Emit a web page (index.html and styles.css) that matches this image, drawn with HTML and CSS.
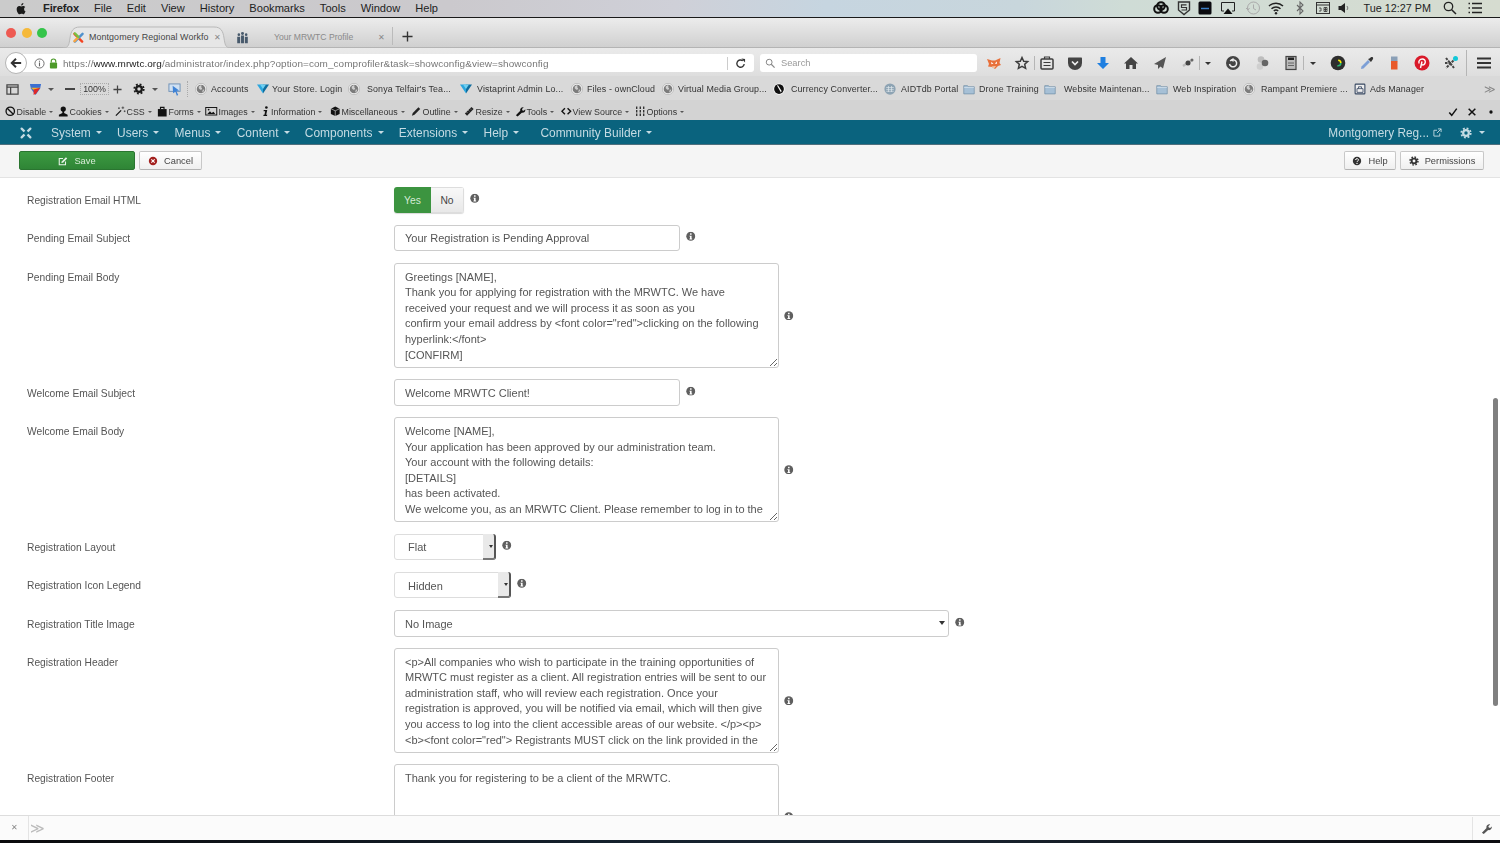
FILE: index.html
```
<!DOCTYPE html>
<html lang="en">
<head>
<meta charset="utf-8">
<title>Montgomery Regional Workforce</title>
<link rel="stylesheet" href="styles.css">
</head>
<body>
<svg class="defs" aria-hidden="true">
  <symbol id="globe" viewBox="0 0 16 16"><circle cx="8" cy="8" r="7.500" fill="#f4f4f4" stroke="#a8a8a8" stroke-width=".8"/><circle cx="8" cy="8" r="5.800" fill="#7c7c7c"/><path d="M5 4.500l2.500-1.500 1.500.8-1 1.700 1.500 1-.5 2-2 .5-2-2zM10.500 8.500l2 .5-1.500 3-1.500.5z" fill="#cfcfcf"/></symbol>
  <symbol id="folder" viewBox="0 0 16 16"><path d="M1 3.500h5l1 1.500h8v9.500H1z" fill="#a6c0d6" stroke="#6d8aa3" stroke-width=".9"/><path d="M1.500 6h13" stroke="#d5e3ee"/></symbol>
  <symbol id="vista" viewBox="0 0 16 16"><path d="M0 2h8L8 14z" fill="#2ba6de"/><path d="M8 2h8l-8 12z" fill="#0f6d9e"/><path d="M4 2h8l-4 6z" fill="#6fd0f2"/></symbol>
  <symbol id="info" viewBox="0 0 16 16"><circle cx="8" cy="8" r="7.500" fill="#5f5f5f"/><rect x="6.800" y="3" width="2.600" height="2.500" fill="#fff"/><path d="M5.800 7h3.600v4.800h1v1.500H5.800v-1.500h1V8.400h-1z" fill="#fff"/></symbol>
  <symbol id="gear" viewBox="0 0 16 16"><circle cx="8" cy="8" r="3.800" fill="none" stroke="currentColor" stroke-width="3"/><circle cx="8" cy="8" r="6.300" fill="none" stroke="currentColor" stroke-width="2.400" stroke-dasharray="2.500 2.450"/></symbol>
  <symbol id="joomla" viewBox="0 0 16 16"><g fill="none" stroke-width="3" stroke-linecap="round"><path d="M3 3.500l9.500 9.500" stroke="#f44321"/><path d="M13 3.500L3.500 13" stroke="#5091cd"/><path d="M3 12.500L12.500 3" stroke="#f9a541" stroke-dasharray="6 8"/><path d="M3.500 3l9.500 9.500" stroke="#7ac143" stroke-dasharray="6 8"/></g></symbol>
</svg>

<div class="page">
  <header class="osbar">
    <svg class="os-apple" viewBox="0 0 16 16"><path d="M11.200 8.500c0-1.600 1.300-2.300 1.400-2.400-.8-1.100-2-1.300-2.400-1.300-1-.1-2 .6-2.500.6-.5 0-1.300-.6-2.200-.6C4.300 4.800 3.200 5.500 2.600 6.500c-1.200 2.100-.3 5.200.9 6.900.6.800 1.200 1.700 2.100 1.700.8 0 1.200-.5 2.200-.5s1.300.5 2.200.5c.9 0 1.500-.8 2-1.700.7-1 .9-1.900 1-1.900-.1 0-1.800-.7-1.800-3zM9.600 3.500c.5-.6.8-1.400.7-2.200-.7 0-1.500.5-2 1-.4.5-.8 1.300-.7 2.100.8.100 1.500-.4 2-.9z"/></svg>
    <nav class="os-menu"><b>Firefox</b><span>File</span><span>Edit</span><span>View</span><span>History</span><span>Bookmarks</span><span>Tools</span><span>Window</span><span>Help</span></nav>
    <div class="os-status">
      <svg class="ic" viewBox="0 0 16 16"><circle cx="5" cy="9" r="3.800" fill="none" stroke="#111" stroke-width="2"/><circle cx="11" cy="9" r="3.800" fill="none" stroke="#111" stroke-width="2"/><circle cx="8" cy="6" r="3.800" fill="none" stroke="#111" stroke-width="2"/></svg>
      <svg class="ic g7" viewBox="0 0 16 16"><path d="M2.500 2h11v8l-5.500 4.500L2.500 10z" fill="none" stroke="#333" stroke-width="1.400"/><path d="M10.500 4.800h-5v2.700h5v2.500h-5" fill="none" stroke="#333" stroke-width="1.200"/></svg>
      <svg class="ic g5" viewBox="0 0 16 16"><rect x="1.500" y="1.500" width="13" height="13" rx="1.500" fill="#0b0b0f"/><path d="M4 8.500h8" stroke="#3d7fc4" stroke-width="1.500"/></svg>
      <svg class="ic g7" viewBox="0 0 16 16"><path d="M4 11H1.500V2.500h13V11H12" fill="none" stroke="#222"/><path d="M3.500 14L8 8.500l4.500 5.500z" fill="#111"/></svg>
      <svg class="ic g9" viewBox="0 0 16 16"><circle cx="8.500" cy="8" r="6" fill="none" stroke="#aaa"/><path d="M8.500 4.500V8.500l2.500 1.500M1 8l2 2 1.500-2" fill="none" stroke="#aaa"/></svg>
      <svg class="ic g7" viewBox="0 0 16 16"><g fill="none" stroke="#222" stroke-width="1.500"><path d="M1 6a10 10 0 0 1 14 0"/><path d="M3.500 8.700a6.500 6.500 0 0 1 9 0"/><path d="M5.800 11a3.300 3.300 0 0 1 4.400 0"/></g><circle cx="8" cy="13.200" r="1.200" fill="#222"/></svg>
      <svg class="ic g8" viewBox="0 0 16 16"><path d="M5 5l6 6-3 3V2l3 3-6 6" fill="none" stroke="#666" stroke-width="1.100"/></svg>
      <svg class="ic g7" viewBox="0 0 16 16"><rect x="1.500" y="2.500" width="13" height="11" fill="none" stroke="#333"/><path d="M1.500 5h13" stroke="#333"/><path d="M4 8h2v3H4M9 7.500h3v4H9zM10.500 7.500v4M9 9.500h3" fill="none" stroke="#333" stroke-width=".8"/></svg>
      <svg class="ic g5" viewBox="0 0 16 16"><path d="M2.500 6H5l4-3v10L5 10H2.500z" fill="#222"/><path d="M11 6a3 3 0 0 1 0 4" fill="none" stroke="#777"/></svg>
      <span class="os-time">Tue 12:27 PM</span>
      <svg class="ic g11" viewBox="0 0 16 16"><circle cx="6.500" cy="6.500" r="4.200" fill="none" stroke="#222" stroke-width="1.300"/><path d="M9.700 9.700L14 14" stroke="#222" stroke-width="1.500"/></svg>
      <svg class="ic g9" viewBox="0 0 16 16"><path d="M5 3.500h10M5 8h10M5 12.500h10M1.500 3.500h1.500M1.500 8h1.500M1.500 12.500h1.500" stroke="#222" stroke-width="1.300"/></svg>
    </div>
  </header>

  <div class="tabs">
    <div class="lights"><i class="lt red"></i><i class="lt yel"></i><i class="lt grn"></i></div>
    <div class="tab active">
      <svg class="tab-shape" viewBox="0 0 168 22" preserveAspectRatio="none"><path d="M0 22c6 0 6-4 7-10 1-7 3-11 10-11h134c7 0 9 4 10 11 1 6 1 10 7 10z" fill="#e6e6e6" stroke="#b9b9b9"/></svg>
      <svg class="fav" viewBox="0 0 16 16"><use href="#joomla"/></svg>
      <span class="tab-title">Montgomery Regional Workfo</span>
      <span class="tab-x">✕</span>
    </div>
    <div class="tab second">
      <svg class="fav" viewBox="0 0 16 16"><g fill="#47596b"><circle cx="3.500" cy="4.500" r="1.600"/><circle cx="8" cy="3" r="1.800"/><circle cx="12.500" cy="4.500" r="1.600"/><path d="M1.500 7h3.600v8H1.500zM6.200 5.500h3.600V15H6.200zM10.900 7h3.600v8h-3.600z"/></g></svg>
      <span class="tab-title dim">Your MRWTC Profile</span>
      <span class="tab-x">✕</span>
    </div>
    <span class="tab-sep"></span>
    <svg class="tab-plus" viewBox="0 0 12 12"><path d="M6 .5v11M.5 6h11" stroke="#333" stroke-width="1.500"/></svg>
  </div>

  <div class="navrow">
    <div class="back"><svg viewBox="0 0 14 14"><path d="M7 2L2 7l5 5M2.500 7H13" fill="none" stroke="#333" stroke-width="2.200"/></svg></div>
    <div class="urlbar">
      <svg class="url-i" viewBox="0 0 12 12"><circle cx="6" cy="6" r="5" fill="none" stroke="#666"/><path d="M6 5v4M6 3v1.200" stroke="#666" stroke-width="1.200"/></svg>
      <svg class="url-lock" viewBox="0 0 10 12"><path d="M2.500 5V3.500a2.500 2.500 0 0 1 5 0V5" fill="none" stroke="#4d9a2a" stroke-width="1.300"/><rect x="1" y="5" width="8" height="6.500" rx="1" fill="#4d9a2a"/></svg>
      <span class="url-text">https://<b>www.mrwtc.org</b>/administrator/index.php?option=com_comprofiler&amp;task=showconfig&amp;view=showconfig</span>
      <span class="url-sep"></span>
      <svg class="url-reload" viewBox="0 0 12 12"><path d="M10 6.500A4 4 0 1 1 8.500 3" fill="none" stroke="#333" stroke-width="1.500"/><path d="M7 .5l4 .5v4z" fill="#333"/></svg>
    </div>
    <div class="searchbar">
      <svg class="search-i" viewBox="0 0 12 12"><circle cx="5" cy="5" r="3.500" fill="none" stroke="#888" stroke-width="1.200"/><path d="M7.500 7.500l4 4" stroke="#888" stroke-width="1.400"/></svg>
      <span>Search</span>
    </div>
    <div class="nav-icons">
      <svg class="ic" viewBox="0 0 16 16"><path d="M1 4l5 1.500h3L14.500 3 13.500 8l1.500 2-3 1-3 3-3-2-4-.5L3 9z" fill="#e8703a"/><path d="M5 7l2.500 1.500-2 .8zM11 6.500L8.800 8.500l2 .5z" fill="#fff"/><path d="M5.500 11.500l2.500 2 2-2.500z" fill="#f3c9a8"/></svg>
      <svg class="ic g12" viewBox="0 0 16 16"><path d="M8 2.500l1.700 3.700 4 .4-3 2.700.9 4L8 11.300l-3.600 2 .9-4-3-2.700 4-.4z" fill="none" stroke="#3c3c3c" stroke-width="1.500"/></svg>
      <span class="nsep g4"></span>
      <svg class="ic g4" viewBox="0 0 16 16"><rect x="2" y="4" width="12" height="10" rx="1" fill="none" stroke="#3c3c3c" stroke-width="1.500"/><path d="M5.500 4V2h5v2M4.500 7.500h7M4.500 10.500h7" stroke="#3c3c3c" stroke-width="1.200" fill="none"/></svg>
      <svg class="ic g12" viewBox="0 0 16 16"><path d="M2 2.500h12c.7 0 1 .4 1 1V8a7 7 0 0 1-14 0V3.500c0-.6.3-1 1-1z" fill="#444"/><path d="M5 6.500l3 3 3-3" fill="none" stroke="#eee" stroke-width="1.700"/></svg>
      <svg class="ic g12" viewBox="0 0 16 16"><path d="M5.500 2h5v6h3.500L8 14 2 8h3.500z" fill="#1f7fe0"/></svg>
      <svg class="ic g12" viewBox="0 0 16 16"><path d="M8 2l7 6.500h-2V14H9.500v-4h-3v4H3V8.500H1z" fill="#444"/></svg>
      <svg class="ic g13" viewBox="0 0 16 16"><path d="M14 2L2 9l4 1v4l2.500-2.500 2.500 2z" fill="#555"/></svg>
      <svg class="ic g12" viewBox="0 0 16 16"><path d="M3 11l9-6" stroke="#bbb" stroke-width="2.500"/><circle cx="8" cy="8" r="2.500" fill="#444"/><circle cx="12" cy="5" r="1.500" fill="#666"/></svg>
      <span class="nsep g3"></span>
      <i class="caret cdark g5"></i>
      <svg class="ic g14" viewBox="0 0 16 16"><circle cx="8" cy="8" r="7" fill="#444"/><path d="M5.200 6A3.600 3.600 0 1 1 4.500 9" fill="none" stroke="#eee" stroke-width="1.500"/><path d="M8.500 2.800L5.500 5l3 2z" fill="#eee"/></svg>
      <svg class="ic g13" viewBox="0 0 16 16"><circle cx="7" cy="4.500" r="3.300" fill="#bdbdbd"/><circle cx="6" cy="11.500" r="3.300" fill="#cfcfcf"/><circle cx="11" cy="8" r="3.300" fill="#666"/></svg>
      <svg class="ic g13" viewBox="0 0 16 16"><rect x="3" y="1.500" width="10" height="13" fill="#bbb" stroke="#444" stroke-width="1.200"/><rect x="5" y="2.500" width="6" height="2.500" fill="#222"/><path d="M5 8h6M5 10.500h6" stroke="#666"/></svg>
      <span class="nsep g4"></span>
      <i class="caret cdark g6"></i>
      <svg class="ic g14" viewBox="0 0 16 16"><circle cx="8" cy="8" r="7.300" fill="#2e2e2e"/><circle cx="8" cy="8" r="2.800" fill="none" stroke="#2bb673" stroke-width="1.600" stroke-dasharray="5 20"/><circle cx="8" cy="8" r="2.800" fill="none" stroke="#e5007d" stroke-width="1.600" stroke-dasharray="5 20" stroke-dashoffset="6"/><circle cx="8" cy="8" r="2.800" fill="none" stroke="#fff200" stroke-width="1.600" stroke-dasharray="5 20" stroke-dashoffset="12"/></svg>
      <svg class="ic g13" viewBox="0 0 16 16"><path d="M9 5L2.500 11.500 2 14l2.500-.5L11 7z" fill="#7d9fd6"/><path d="M9 4l3 3 1-1.500c2-2 1-3.500 0-3.500-1 0-1.500.5-2.500 1.500z" fill="#333"/></svg>
      <svg class="ic g11" viewBox="0 0 16 16"><rect x="5" y="1.500" width="6.500" height="5" fill="#8ba0b7"/><rect x="5" y="6" width="6.500" height="8.500" fill="#e85a2b"/></svg>
      <svg class="ic g12" viewBox="0 0 16 16"><circle cx="8" cy="8" r="7.500" fill="#d91a2a"/><path d="M6.500 13l1.500-6.500M5.200 8.500c-1.200-2.500.8-4.500 3-4.500 2.200 0 3.400 1.500 3 3.500-.4 2-2 3-3.200 2.200" fill="none" stroke="#fff" stroke-width="1.400"/></svg>
      <svg class="ic g13" viewBox="0 0 16 16"><path d="M3 3l8 10M13 3L3 13M2 8h7" stroke="#444" stroke-width="2" stroke-dasharray="2.500 1"/><circle cx="12.500" cy="3.500" r="2.500" fill="#12c8d8"/></svg>
      <span class="nsep tall g7"></span>
      <svg class="ic g9" viewBox="0 0 16 16"><path d="M1 3.500h14M1 8h14M1 12.500h14" stroke="#333" stroke-width="2.200"/></svg>
    </div>
  </div>

  <div class="bmrow">
    <div class="bm-tools">
      <svg class="bt-side" viewBox="0 0 14 14"><rect x="1" y="2" width="12" height="10" fill="none" stroke="#444" stroke-width="1.300"/><path d="M1 4.500h12M5 4.500V12" stroke="#444" stroke-width="1.300"/></svg>
      <svg class="bt-fox" viewBox="0 0 14 14"><path d="M1 1h12l-1 5-5 7-5-7z" fill="#3c6fd1"/><path d="M2 5h10L7 9z" fill="#f0b429"/><path d="M5 7l7-2-4 6-3 2z" fill="#df2a2a"/></svg>
      <i class="caret cmid bt-c1"></i>
      <span class="bt-minus"></span>
      <span class="bt-zoom">100%</span>
      <svg class="bt-plus" viewBox="0 0 10 10"><path d="M5 .5v9M.5 5h9" stroke="#444" stroke-width="1.400"/></svg>
      <svg class="bt-gear" viewBox="0 0 16 16"><use href="#gear"/></svg>
      <i class="caret cmid bt-c2"></i>
      <svg class="bt-cursor" viewBox="0 0 14 14"><rect x="1" y="1" width="12" height="8" fill="#cfe0f2" stroke="#6d8fb5"/><path d="M5 3l7 5-3 .5L11 13l-1.500.7L8 9.500 5.500 11z" fill="#3f83d6"/></svg>
      <span class="bt-dots"></span>
    </div>
    <div class="bm-list">
      <a class="bm t4"><svg viewBox="0 0 16 16"><use href="#globe"/></svg>Accounts</a>
      <a class="bm t3"><svg viewBox="0 0 16 16"><use href="#vista"/></svg>Your Store. Login</a>
      <a class="bm t7"><svg viewBox="0 0 16 16"><use href="#globe"/></svg>Sonya Telfair's Tea...</a>
      <a class="bm t5"><svg viewBox="0 0 16 16"><use href="#vista"/></svg>Vistaprint Admin Lo...</a>
      <a class="bm t4"><svg viewBox="0 0 16 16"><use href="#globe"/></svg>Files - ownCloud</a>
      <a class="bm t4"><svg viewBox="0 0 16 16"><use href="#globe"/></svg>Virtual Media Group...</a>
      <a class="bm t6"><svg viewBox="0 0 16 16"><circle cx="8" cy="8" r="7.500" fill="#fff"/><circle cx="8" cy="8" r="6.500" fill="#111"/><path d="M5.500 3.500l5 9 1-2-5-8z" fill="#fff"/></svg>Currency Converter...</a>
      <a class="bm t5"><svg viewBox="0 0 16 16"><circle cx="8" cy="8" r="7.500" fill="#8da3b3"/><path d="M3 6h10M3 8.500h10M3 11h10M6 4v8M10 4v8" stroke="#dfe7ec" stroke-width=".9"/></svg>AIDTdb Portal</a>
      <a class="bm t4"><svg viewBox="0 0 16 16"><use href="#folder"/></svg>Drone Training</a>
      <a class="bm t8"><svg viewBox="0 0 16 16"><use href="#folder"/></svg>Website Maintenan...</a>
      <a class="bm t5"><svg viewBox="0 0 16 16"><use href="#folder"/></svg>Web Inspiration</a>
      <a class="bm t6"><svg viewBox="0 0 16 16"><use href="#globe"/></svg>Rampant Premiere ...</a>
      <a class="bm t4"><svg viewBox="0 0 16 16"><rect x="1.500" y="1.500" width="13" height="13" rx="1" fill="#eee" stroke="#3a4a63" stroke-width="1.500"/><path d="M4 7.500h8v5H4zM6 7.500V5h4v2.500" fill="none" stroke="#3a4a63" stroke-width="1.100"/></svg>Ads Manager</a>
    </div>
    <span class="bm-more">≫</span>
  </div>

  <div class="devrow">
    <div class="dev-list">
      <a class="dv"><svg viewBox="0 0 12 12"><circle cx="6" cy="6" r="4.800" fill="none" stroke="#111" stroke-width="1.500"/><path d="M2.500 2.500l7 7" stroke="#111" stroke-width="1.500"/></svg>Disable<i class="tri"></i></a>
      <a class="dv"><svg viewBox="0 0 12 12"><circle cx="6" cy="3.500" r="3" fill="#111"/><path d="M5 5h2v3l4 2v2H1v-2l4-2z" fill="#111"/></svg>Cookies<i class="tri"></i></a>
      <a class="dv"><svg viewBox="0 0 12 12"><path d="M1 11l6-6" stroke="#111" stroke-width="1.500"/><path d="M9 .5v3M7.500 2h3M11 5v2M10 6h2M4.500 1.500v2M3.500 2.500h2" stroke="#333" stroke-width=".8"/></svg>CSS<i class="tri"></i></a>
      <a class="dv"><svg viewBox="0 0 12 12"><path d="M1 3.500h10V12H1z" fill="#111"/><path d="M4 3.500V1.500h4v2" fill="none" stroke="#111" stroke-width="1.300"/></svg>Forms<i class="tri"></i></a>
      <a class="dv wide"><svg viewBox="0 0 14 12"><rect x=".7" y="1.700" width="12.600" height="8.600" fill="none" stroke="#111" stroke-width="1.100"/><path d="M2.500 9l3-3 2 2 2-1.500L11.500 9z" fill="#111"/><circle cx="4" cy="4" r="1" fill="#111"/></svg>Images<i class="tri"></i></a>
      <a class="dv"><svg class="narrow" viewBox="0 0 8 12"><circle cx="5" cy="1.700" r="1.500" fill="#111"/><path d="M2 4.500h4L4.800 10H6l-.3 1.500H1.500L1.800 10h1l.8-4H1.800z" fill="#111"/></svg>Information<i class="tri"></i></a>
      <a class="dv"><svg viewBox="0 0 12 12"><path d="M6 .5l5 2.500v6L6 11.500 1 9V3z" fill="#111"/><path d="M1 3l5 2.500L11 3M6 5.500v6" stroke="#ddd" stroke-width=".7" fill="none"/></svg>Miscellaneous<i class="tri"></i></a>
      <a class="dv"><svg viewBox="0 0 12 12"><path d="M1 11l1-3 6.500-6.500 2 2L4 10z" fill="#222"/></svg>Outline<i class="tri"></i></a>
      <a class="dv"><svg viewBox="0 0 12 12"><path d="M1 8.500L8.500 1 11 3.500 3.500 11z" fill="#222"/><path d="M3 7l1 1M5 5l1 1M7 3l1 1" stroke="#ddd" stroke-width=".7"/></svg>Resize<i class="tri"></i></a>
      <a class="dv"><svg viewBox="0 0 12 12"><path d="M1 10.500L6 5.500c-.6-2 1-4.500 4-4L8 3.500l.5 1.500 1.500.5 1.800-1.800c.4 3-2 4.500-4 4L3 12z" fill="#111"/></svg>Tools<i class="tri"></i></a>
      <a class="dv"><svg viewBox="0 0 12 12"><path d="M4.500 2.500L1 6l3.500 3.500M7.500 2.500L11 6 7.500 9.500" fill="none" stroke="#111" stroke-width="1.600"/></svg>View Source<i class="tri"></i></a>
      <a class="dv"><svg viewBox="0 0 12 12"><path d="M2 .5v11M6 .5v11M10 .5v11" stroke="#111" stroke-width="1.300" stroke-dasharray="3 1"/></svg>Options<i class="tri"></i></a>
    </div>
    <div class="dev-end">
      <svg viewBox="0 0 12 12"><path d="M1.500 6.500l3 3.500L10.500 2" fill="none" stroke="#111" stroke-width="1.800"/></svg>
      <svg viewBox="0 0 12 12"><path d="M2 2l8 8M10 2l-8 8" stroke="#111" stroke-width="1.800"/></svg>
      <svg viewBox="0 0 12 12"><circle cx="6" cy="6" r="2" fill="#111"/></svg>
    </div>
  </div>

  <nav class="jnav">
    <svg class="j-logo" viewBox="0 0 16 16"><g fill="none" stroke="#c5dbe3" stroke-width="2.600" stroke-linecap="round"><path d="M3 3l10 10M13 3L3 13"/></g><path d="M8 4.500L11.500 8 8 11.500 4.500 8z" fill="#0a637e"/></svg>
    <div class="j-menu">
      <a>System<i class="caret clight"></i></a>
      <a>Users<i class="caret clight"></i></a>
      <a>Menus<i class="caret clight"></i></a>
      <a>Content<i class="caret clight"></i></a>
      <a>Components<i class="caret clight"></i></a>
      <a>Extensions<i class="caret clight"></i></a>
      <a>Help<i class="caret clight"></i></a>
      <a class="j-cb">Community Builder<i class="caret clight"></i></a>
    </div>
    <div class="j-right">
      <span class="j-site">Montgomery Reg...</span>
      <svg class="j-ext" viewBox="0 0 10 10"><path d="M7.500 6v3H1V2.500h3.500M5.500 1H9v3.500M9 1L4.500 5.500" fill="none" stroke="#c5dbe3"/></svg>
      <svg class="j-gear" viewBox="0 0 16 16"><use href="#gear"/></svg>
      <i class="caret clight j-c"></i>
    </div>
  </nav>

  <div class="toolbar">
    <button class="btn save"><svg viewBox="0 0 12 12"><path d="M9 6.500V10.500H1.500V3H6" fill="none" stroke="#e6f2e6" stroke-width="1.300"/><path d="M4 8.500l.5-2L9.500 1.500 11 3 6 8z" fill="#e6f2e6"/></svg>Save</button>
    <button class="btn cancel"><svg viewBox="0 0 12 12"><circle cx="6" cy="6" r="5" fill="#a3211f"/><path d="M4 4l4 4M8 4l-4 4" stroke="#fff" stroke-width="1.300"/></svg>Cancel</button>
    <span class="tb-space"></span>
    <button class="btn help"><svg viewBox="0 0 12 12"><circle cx="6" cy="6" r="5" fill="#333"/><path d="M4.200 4.800C4.300 3.700 5 3.200 6 3.200s1.800.6 1.800 1.500C7.800 6 6 6 6 7.200" fill="none" stroke="#fff" stroke-width="1.200"/><circle cx="6" cy="8.900" r=".8" fill="#fff"/></svg>Help</button>
    <button class="btn perm"><svg viewBox="0 0 16 16"><use href="#gear"/></svg>Permissions</button>
  </div>

  <main class="content">
    <div class="row">
      <label>Registration Email HTML</label>
      <div class="ctl">
        <div class="yesno"><span class="yes">Yes</span><span class="no">No</span></div>
        <svg class="info up" viewBox="0 0 16 16"><use href="#info"/></svg>
      </div>
    </div>
    <div class="row">
      <label>Pending Email Subject</label>
      <div class="ctl">
        <input class="inp" type="text" value="Your Registration is Pending Approval">
        <svg class="info up" viewBox="0 0 16 16"><use href="#info"/></svg>
      </div>
    </div>
    <div class="row">
      <label>Pending Email Body</label>
      <div class="ctl">
        <textarea class="area" wrap="off">Greetings [NAME],
Thank you for applying for registration with the MRWTC. We have
received your request and we will process it as soon as you
confirm your email address by &lt;font color="red"&gt;clicking on the following
hyperlink:&lt;/font&gt;
[CONFIRM]</textarea>
        <svg class="info" viewBox="0 0 16 16"><use href="#info"/></svg>
      </div>
    </div>
    <div class="row">
      <label>Welcome Email Subject</label>
      <div class="ctl">
        <input class="inp" type="text" value="Welcome MRWTC Client!">
        <svg class="info up" viewBox="0 0 16 16"><use href="#info"/></svg>
      </div>
    </div>
    <div class="row">
      <label>Welcome Email Body</label>
      <div class="ctl">
        <textarea class="area" wrap="off">Welcome [NAME],
Your application has been approved by our administration team.
Your account with the following details:
[DETAILS]
has been activated.
We welcome you, as an MRWTC Client. Please remember to log in to the</textarea>
        <svg class="info" viewBox="0 0 16 16"><use href="#info"/></svg>
      </div>
    </div>
    <div class="row">
      <label>Registration Layout</label>
      <div class="ctl">
        <div class="sel native sel-flat"><select><option>Flat</option></select></div>
        <svg class="info up" viewBox="0 0 16 16"><use href="#info"/></svg>
      </div>
    </div>
    <div class="row">
      <label>Registration Icon Legend</label>
      <div class="ctl">
        <div class="sel native sel-hidden"><select><option>Hidden</option></select></div>
        <svg class="info up" viewBox="0 0 16 16"><use href="#info"/></svg>
      </div>
    </div>
    <div class="row">
      <label>Registration Title Image</label>
      <div class="ctl">
        <div class="sel sel-wide"><select><option>No Image</option></select></div>
        <svg class="info up" viewBox="0 0 16 16"><use href="#info"/></svg>
      </div>
    </div>
    <div class="row">
      <label>Registration Header</label>
      <div class="ctl">
        <textarea class="area" wrap="off">&lt;p&gt;All companies who wish to participate in the training opportunities of
MRWTC must register as a client. All registration entries will be sent to our
administration staff, who will review each registration. Once your
registration is approved, you will be notified via email, which will then give
you access to log into the client accessible areas of our website. &lt;/p&gt;&lt;p&gt;
&lt;b&gt;&lt;font color="red"&gt; Registrants MUST click on the link provided in the</textarea>
        <svg class="info" viewBox="0 0 16 16"><use href="#info"/></svg>
      </div>
    </div>
    <div class="row">
      <label>Registration Footer</label>
      <div class="ctl">
        <textarea class="area" wrap="off">Thank you for registering to be a client of the MRWTC.</textarea>
        <svg class="info" viewBox="0 0 16 16"><use href="#info"/></svg>
      </div>
    </div>
    <div class="scrollthumb"></div>
  </main>

  <footer class="findbar">
    <span class="fb-x">✕</span>
    <span class="fb-more">≫</span>
    <span class="fb-space"></span>
    <svg class="fb-wrench" viewBox="0 0 12 12"><path d="M1 10.500L6 5.500c-.6-2 1-4.500 4-4L8 3.500l.5 1.500 1.500.5 1.800-1.800c.4 3-2 4.500-4 4L3 12z" fill="#555"/></svg>
  </footer>
  <div class="desk"></div>
</div>
</body>
</html>
```
FILE: styles.css
```
* { box-sizing: border-box; }
html, body { margin: 0; height: 100%; overflow: hidden; }
body { font-family: "Liberation Sans", Arial, sans-serif; color: #333; background: #fff; }
.defs { width: 0; height: 0; position: absolute; }
.page { display: flex; flex-direction: column; width: 1500px; height: 843px; overflow: hidden; filter: blur(.35px); }
.ic { width: 16px; height: 16px; flex: none; }
.g3 { margin-left: 3px; } .g4 { margin-left: 4px; } .g5 { margin-left: 5px; } .g6 { margin-left: 6px; }
.g7 { margin-left: 7px; } .g8 { margin-left: 8px; } .g9 { margin-left: 9px; } .g11 { margin-left: 11px; }
.g12 { margin-left: 12px; } .g13 { margin-left: 13px; } .g14 { margin-left: 14px; }
.caret { display: block; flex: none; width: 0; height: 0; border-left: 3.500px solid transparent; border-right: 3.500px solid transparent; border-top: 3.500px solid #444; }
.cdark { border-top-color: #333; }
.cmid { border-top-color: #555; }
.clight { border-top-color: #c5dbe3; }

/* OS menu bar */
.osbar { flex: none; height: 18px; display: flex; align-items: center; padding: 0 17px 1px 15px; border-bottom: 1px solid #1a1a1a; background: linear-gradient(90deg, #cbcbcb 0, #cbc9cd 30%, #cfd0d8 45%, #c6d5e0 55%, #c8d6dc 68%, #cfdcd6 75%, #d6dcd0 100%); font-size: 11.100px; color: #222; }
.os-apple { width: 13px; height: 13px; fill: #1b1b1b; flex: none; }
.os-menu { display: flex; gap: 15px; margin-left: 15px; }
.os-menu b { letter-spacing: -.15px; }
.os-status { margin-left: auto; display: flex; align-items: center; }
.os-time { margin-left: 12px; font-size: 10.800px; }

/* Tab strip */
.tabs { flex: none; height: 30px; display: flex; align-items: flex-end; background: linear-gradient(#ececec, #d0d0d0); border-bottom: 1px solid #b4b4b4; }
.lights { width: 63px; height: 29px; padding: 10px 0 0 6px; display: flex; gap: 5.500px; align-self: flex-start; }
.lt { width: 10px; height: 10px; border-radius: 50%; display: block; }
.red { background: #ee5a52; } .yel { background: #f5b93a; } .grn { background: #35c44a; }
.tab { position: relative; height: 22px; display: flex; align-items: center; font-size: 8.900px; letter-spacing: .09px; margin-bottom: -1px; }
.tab.active { width: 168px; padding-left: 9px; }
.tab-shape { position: absolute; inset: 0; width: 100%; height: 100%; }
.fav { position: relative; width: 13px; height: 13px; flex: none; }
.tab-title { position: relative; margin-left: 4px; width: 121px; white-space: nowrap; color: #444; }
.tab-x { position: relative; font-size: 8px; color: #888; margin-left: 4px; }
.tab.second { width: 161px; padding-left: 5px; font-size: 8.600px; letter-spacing: 0; }
.tab-title.dim { margin-left: 25px; width: 100px; color: #8a8a8a; }
.tab-sep { width: 1px; height: 18px; background: #bbb; margin: 0 0 2px 0; }
.tab-plus { width: 11px; height: 11px; margin: 0 0 5px 9px; }

/* Navigation row */
.navrow { flex: none; height: 28px; display: flex; align-items: center; padding: 2px 0 0 5px; background: linear-gradient(#eaeaea, #dedede); position: relative; }
.back { flex: none; width: 22px; height: 22px; border-radius: 50%; background: #fff; border: 1px solid #b5b5b5; display: flex; align-items: center; justify-content: center; margin-right: -4px; position: relative; }
.back svg { width: 12px; height: 12px; }
.urlbar { flex: none; width: 731px; height: 18px; background: #fff; border-radius: 0 3px 3px 0; display: flex; align-items: center; padding-left: 11px; }
.url-i { width: 11px; height: 11px; flex: none; }
.url-lock { width: 9px; height: 11px; flex: none; margin-left: 4px; }
.url-text { font-size: 9.950px; color: #777; margin-left: 5px; white-space: nowrap; letter-spacing: .08px; }
.url-text b { font-weight: 400; color: #222; }
.url-sep { width: 1px; height: 13px; background: #ccc; margin-left: auto; }
.url-reload { width: 11px; height: 11px; margin: 0 8px 0 7px; flex: none; }
.searchbar { flex: none; width: 217px; height: 18px; margin-left: 6px; background: #fff; border-radius: 3px; display: flex; align-items: center; padding-left: 5px; font-size: 9.300px; color: #999; }
.search-i { width: 10px; height: 10px; margin-right: 6px; }
.nav-icons { display: flex; align-items: center; margin-left: 9px; }
.nsep { display: block; width: 1px; height: 14px; background: #b5b5b5; flex: none; }
.nsep.tall { height: 26px; }

/* Bookmarks row */
.bmrow { flex: none; height: 24px; display: flex; align-items: center; padding-top: 2px; background: #d9d9d9; font-size: 8.900px; color: #333; }
.bm-tools { flex: none; width: 195px; display: flex; align-items: center; padding-left: 6px; }
.bt-side { width: 13px; height: 13px; }
.bt-fox { width: 13px; height: 13px; margin-left: 10px; }
.bt-c1 { margin-left: 6px; }
.bt-minus { width: 10px; height: 2px; background: #444; margin-left: 11px; }
.bt-zoom { width: 29px; height: 12px; line-height: 11px; text-align: center; border: 1px dotted #aaa; margin-left: 5px; }
.bt-plus { width: 9px; height: 9px; margin-left: 4px; }
.bt-gear { width: 12px; height: 12px; margin-left: 11px; color: #1a1a1a; }
.bt-c2 { margin-left: 7px; }
.bt-cursor { width: 13px; height: 13px; margin-left: 10px; }
.bt-dots { width: 1px; height: 16px; border-left: 1px dotted #aaa; margin-left: 6px; }
.bm-list { display: grid; grid-template-columns: 62px 91px 112px 111px 91px 111px 111px 79px 81px 112px 87px 111px 90px; }
.bm { display: flex; align-items: center; white-space: nowrap; letter-spacing: .12px; }
.bm.t3 { gap: 3px; } .bm.t4 { gap: 4px; } .bm.t5 { gap: 5px; } .bm.t6 { gap: 6px; } .bm.t7 { gap: 7px; } .bm.t8 { gap: 8px; }
.bm svg { width: 12px; height: 12px; flex: none; }
.bm-more { margin-left: auto; margin-right: 4px; color: #888; font-size: 11px; }

/* Web developer row */
.devrow { flex: none; height: 20px; display: flex; align-items: center; justify-content: space-between; background: #d3d3d3; font-size: 8.900px; color: #333; padding: 3px 4px 0 5px; }
.dev-list { display: grid; grid-template-columns: 53px 57px 42px 48px 57px 68px 81px 53px 51px 46px 74px 60px; }
.dv { display: flex; align-items: center; white-space: nowrap; gap: 1px; }
.dv svg { width: 10.500px; height: 10.500px; flex: none; }
.dv.wide svg { width: 12.500px; }
.dv svg.narrow { width: 7px; margin: 0 1px 0 0; }
.tri { display: block; width: 0; height: 0; margin-left: 2px; border-left: 2px solid transparent; border-right: 2px solid transparent; border-top: 2.500px solid #555; }
.dev-end { display: flex; align-items: center; gap: 9px; }
.dev-end svg { width: 10px; height: 10px; }

/* Joomla nav */
.jnav { flex: none; height: 25px; display: flex; align-items: center; background: #0a637e; border-bottom: 1px solid #4f6f7d; padding: 1px 15px 0 19px; color: #c5dbe3; font-size: 11.950px; }
.j-logo { width: 14px; height: 14px; }
.j-menu { display: flex; margin-left: 18px; gap: 15.300px; }
.j-menu a { display: flex; align-items: center; gap: 5px; }
.j-menu .j-cb { margin-left: 6px; }
.j-right { margin-left: auto; display: flex; align-items: center; }
.j-site { font-size: 11.850px; }
.j-ext { width: 9px; height: 9px; margin-left: 3.500px; }
.j-gear { width: 12px; height: 12px; margin-left: 18.500px; color: #c5dbe3; }
.j-c { margin-left: 7px; }

/* Toolbar */
.toolbar { flex: none; height: 33px; display: flex; align-items: center; gap: 4px; padding: 0 16px 1px 19px; background: #f5f5f5; border-bottom: 1px solid #e3e3e3; }
.tb-space { flex: 1; }
.btn { height: 19px; padding: 0; display: flex; align-items: center; justify-content: center; font: 9.300px "Liberation Sans", Arial, sans-serif; color: #444; border: 1px solid #c8c8c8; border-bottom-color: #b3b3b3; border-radius: 2px; background: linear-gradient(#fff, #efefef); }
.btn svg { width: 10px; height: 10px; margin-right: 6px; }
.save { width: 116px; color: #d8ecd8; background: linear-gradient(#3c9a41, #2f8536); border-color: #2a7530; }
.cancel { width: 63px; }
.help { width: 52px; }
.perm { width: 84px; }
.perm svg { color: #333; }

/* Form */
.content { flex: 1; min-height: 0; position: relative; overflow: hidden; padding: 8.700px 0 0 27px; background: #fff; color: #555; font-size: 10.250px; }
.row { display: grid; grid-template-columns: 367px 1fr; margin-bottom: 11.700px; }
.row label { padding-top: 7.500px; line-height: 13px; }
.ctl { display: flex; align-items: center; gap: 6px; }
.info { width: 9.500px; height: 9.500px; flex: none; }
.info.up { margin-top: -2px; transform: translateY(-.5px); }
.area + .info { margin-left: -1px; }
.yesno { display: flex; height: 26.500px; width: 70px; font-size: 10.300px; border-radius: 3px; overflow: hidden; box-shadow: 0 1px 1px rgba(0,0,0,.15); }
.yes { width: 37px; padding-top: 1px; background: #3c9440; color: #d6ead6; display: flex; align-items: center; justify-content: center; }
.no { flex: 1; padding-top: 1px; background: linear-gradient(#f8f8f8, #e8e8e8); color: #444; border: 1px solid #ddd; border-left: 0; display: flex; align-items: center; justify-content: center; }
.inp { width: 286px; height: 26.500px; padding: 0 10px; font: 11px "Liberation Sans", Arial, sans-serif; color: #555; border: 1px solid #ccc; border-radius: 3px; outline: 0; }
.area { display: block; width: 385px; height: 104.500px; padding: 5.500px 10px; margin: 0; font: 11px/15.600px "Liberation Sans", Arial, sans-serif; color: #555; border: 1px solid #ccc; border-radius: 3px; overflow: hidden; resize: vertical; outline: 0; }
.sel { position: relative; height: 26.500px; }
.sel select { display: block; width: 100%; height: 100%; padding: 1px 10px 0; appearance: none; font: 11px "Liberation Sans", Arial, sans-serif; color: #555; background: #fff; border: 1px solid #ccc; border-radius: 3px; outline: 0; }
.sel::after { content: ""; position: absolute; top: 11px; right: 4px; width: 0; height: 0; border-left: 3.500px solid transparent; border-right: 3.500px solid transparent; border-top: 4px solid #333; }
.sel.native select { padding-left: 13px; border-color: #ddd; }
.sel.native::before { content: ""; position: absolute; top: 0; right: 0; bottom: 0; width: 11px; background: #e9e9e9; border-right: 2px solid #555; border-bottom: 2px solid #777; border-radius: 0 3px 3px 0; pointer-events: none; }
.sel.native::after { right: 3px; border-left-width: 2.500px; border-right-width: 2.500px; border-top-width: 3px; }
.sel-flat { width: 102px; }
.sel-hidden { width: 117px; }
.sel-wide { width: 555px; }
.scrollthumb { position: absolute; right: 2px; top: 220px; width: 5px; height: 308px; border-radius: 3px; background: #808080; }

/* Bottom bar */
.findbar { flex: none; height: 25px; display: flex; align-items: center; background: #fbfbfb; border-top: 1px solid #ddd; color: #aaa; }
.fb-x { width: 29px; height: 100%; text-align: center; line-height: 24px; font-size: 8px; color: #888; border-right: 1px solid #e4e4e4; }
.fb-more { margin-left: 1px; width: 13px; font-size: 14px; color: #bbb; text-align: center; }
.fb-space { flex: 1; }
.fb-wrench { box-sizing: content-box; width: 11px; height: 11px; padding: 6px 8px 6px 8px; border-left: 1px solid #e4e4e4; margin-right: 0; }
.desk { flex: none; height: 3px; background: linear-gradient(90deg, #0a0a0c, #14202c 40%, #1a2531 60%, #0c0c10); }
```
